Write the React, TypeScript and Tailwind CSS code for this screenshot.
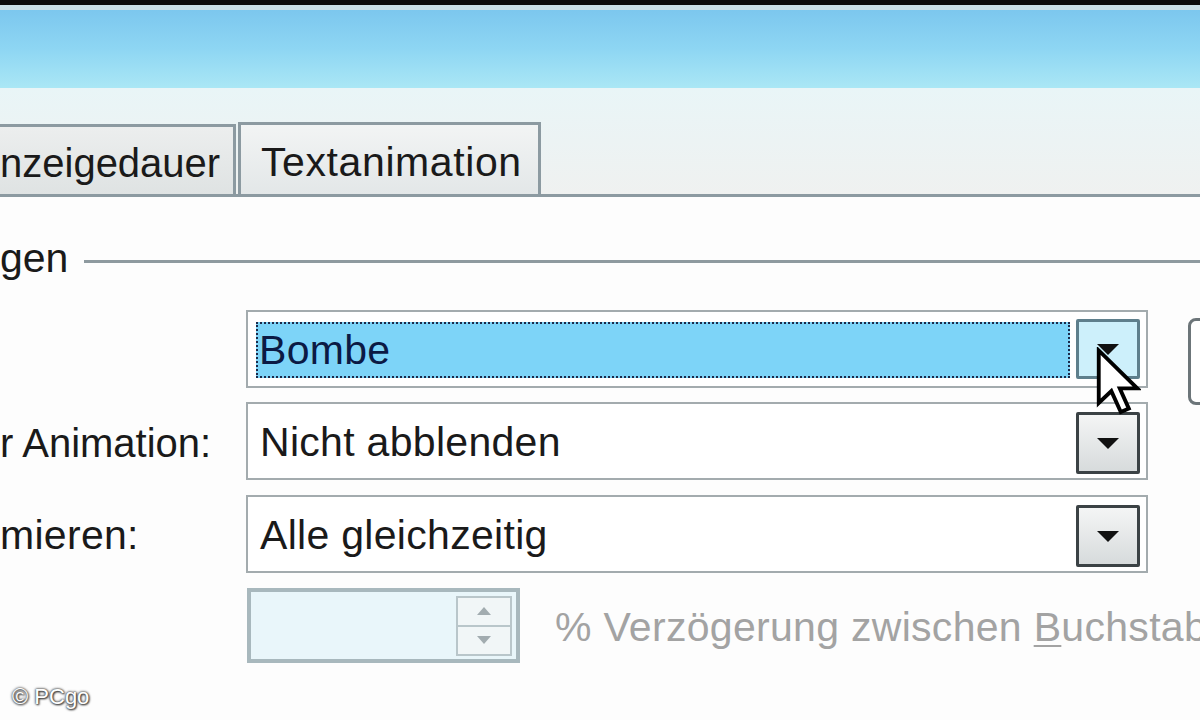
import React from "react";

const font = { fontFamily: '"Liberation Sans", Arial, sans-serif' };

function Arrow({ light }: { light?: boolean }) {
  return (
    <svg width="26" height="14" viewBox="0 0 26 14">
      <path d="M2 2 L24 2 L13 13 Z" fill={light ? "#9aa4a8" : "#111"} />
    </svg>
  );
}

function ComboButton() {
  return (
    <div className="w-[64px] h-[62px] shrink-0 border-[3px] border-[#3b4245] rounded-[2px] bg-gradient-to-b from-[#f4f5f5] to-[#d7dbdc] flex items-center justify-center">
      <Arrow />
    </div>
  );
}

function Cursor() {
  return (
    <svg
      className="absolute left-[1095px] top-[347px]"
      width="46"
      height="70"
      viewBox="0 0 13 20"
    >
      <path
        d="M1 1 L1 16 L4.6 12.6 L7.3 18.6 L9.6 17.6 L7 11.8 L12 11.8 Z"
        fill="#fff"
        stroke="#000"
        strokeWidth="1.1"
        strokeLinejoin="miter"
      />
    </svg>
  );
}

function Combo({ text, selected }: { text: string; selected?: boolean }) {
  if (selected) {
    return (
      <div className="w-[902px] h-[78px] shrink-0 border-2 border-[#a3abae] bg-white flex items-center pl-[8px] pr-[6px] gap-[6px]">
        <div className="flex-1 h-[56px] mt-[2px] bg-[#7dd4f8] border-2 border-dotted border-[#1b2a4a] flex items-center pl-[1px]">
          <span className="text-[41px] tracking-[0.3px] text-[#0b1a44] leading-none">{text}</span>
        </div>
        <div className="w-[64px] h-[60px] shrink-0 border-[3px] border-[#5e7f8c] rounded-[2px] bg-[#cdf0fb] flex items-center justify-center">
          <Arrow />
        </div>
      </div>
    );
  }
  return (
    <div className="w-[902px] h-[78px] shrink-0 border-2 border-[#a3abae] bg-white flex items-center pl-[12px] pr-[6px] pt-[3px]">
      <span className="flex-1 text-[41px] tracking-[0.3px] text-[#1a1a1a] leading-none">{text}</span>
      <ComboButton />
    </div>
  );
}

export default function App() {
  return (
    <div
      className="relative w-[1200px] h-[720px] overflow-hidden bg-[#fdfdfd] flex flex-col"
      style={font}
    >
      <div className="h-[5px] shrink-0 bg-[#0b0b0b]" />
      <div className="h-[5px] shrink-0 bg-[#c9dfe6]" />
      <div className="h-[78px] shrink-0 bg-gradient-to-b from-[#7cc7ee] via-[#8ed6f3] to-[#aae7f5]" />
      <div className="h-[109px] shrink-0 bg-gradient-to-b from-[#e9f5f7] to-[#eff1f0] flex items-end border-b-[3px] border-[#8c9aa1]">
        <div className="w-[236px] h-[70px] shrink-0 border-t-[3px] border-r-[3px] border-[#8c9aa1] bg-gradient-to-b from-[#eceeee] to-[#dfe3e3] flex items-center pt-[5px]">
          <span className="text-[40px] text-[#1a1a1a] leading-none whitespace-nowrap">nzeigedauer</span>
        </div>
        <div className="ml-[2px] w-[303px] h-[72px] shrink-0 border-t-[3px] border-x-[3px] border-[#8c9aa1] bg-gradient-to-b from-[#f2f4f4] to-[#e3e7e8] flex items-center pl-[20px] pt-[5px]">
          <span className="text-[41px] tracking-[0.6px] text-[#1a1a1a] leading-none">Textanimation</span>
        </div>
      </div>

      <div className="flex items-center h-[44px] mt-[42px] shrink-0">
        <span className="text-[41px] text-[#1a1a1a] leading-none mb-[6px]">gen</span>
        <div className="flex-1 ml-[16px] h-[3px] bg-[#8e9a9f]" />
      </div>

      <div className="flex flex-col gap-[14px] mt-[27px]">
        <div className="flex items-start h-[78px]">
          <div className="w-[246px] shrink-0" />
          <Combo text="Bombe" selected />
          <div className="ml-[40px] mt-[8px] w-[40px] h-[87px] shrink-0 border-[3px] border-[#6c7579] rounded-[8px] bg-white" />
        </div>
        <div className="flex items-center">
          <div className="w-[246px] shrink-0 text-[40px] text-[#1a1a1a] leading-none pt-[3px] whitespace-nowrap">
            r Animation:
          </div>
          <Combo text="Nicht abblenden" />
        </div>
        <div className="flex items-center mt-[1px]">
          <div className="w-[246px] shrink-0 text-[41px] tracking-[0.3px] text-[#1a1a1a] leading-none pt-[3px]">mieren:</div>
          <Combo text="Alle gleichzeitig" />
        </div>
        <div className="flex items-center mt-[1px]">
          <div className="w-[247px] shrink-0" />
          <div className="w-[273px] h-[75px] shrink-0 border-[4px] border-[#a8b8bd] bg-[#e9f6fa] flex items-center justify-end pr-[4px]">
            <div className="w-[56px] h-[60px] border-2 border-[#b9c6ca] bg-[#f1f6f7] flex flex-col">
              <div className="flex-1 flex items-center justify-center border-b-2 border-[#b9c6ca]">
                <svg width="16" height="10" viewBox="0 0 16 10"><path d="M8 1 L15 9 L1 9 Z" fill="#a2acb0" /></svg>
              </div>
              <div className="flex-1 flex items-center justify-center">
                <svg width="16" height="10" viewBox="0 0 16 10"><path d="M1 1 L15 1 L8 9 Z" fill="#a2acb0" /></svg>
              </div>
            </div>
          </div>
          <span className="ml-[35px] pt-[3px] text-[41px] tracking-[0.3px] text-[#a3a3a3] leading-none whitespace-nowrap">
            % Verzögerung zwischen <span className="underline decoration-2 underline-offset-4">B</span>uchstaben
          </span>
        </div>
      </div>

      <Cursor />

      <div
        className="absolute left-[12px] top-[686px] text-[22px] text-white leading-none"
        style={{ textShadow: "0 0 2px #444, 0 0 3px #444, 1px 1px 2px #333" }}
      >
        © PCgo
      </div>
    </div>
  );
}
